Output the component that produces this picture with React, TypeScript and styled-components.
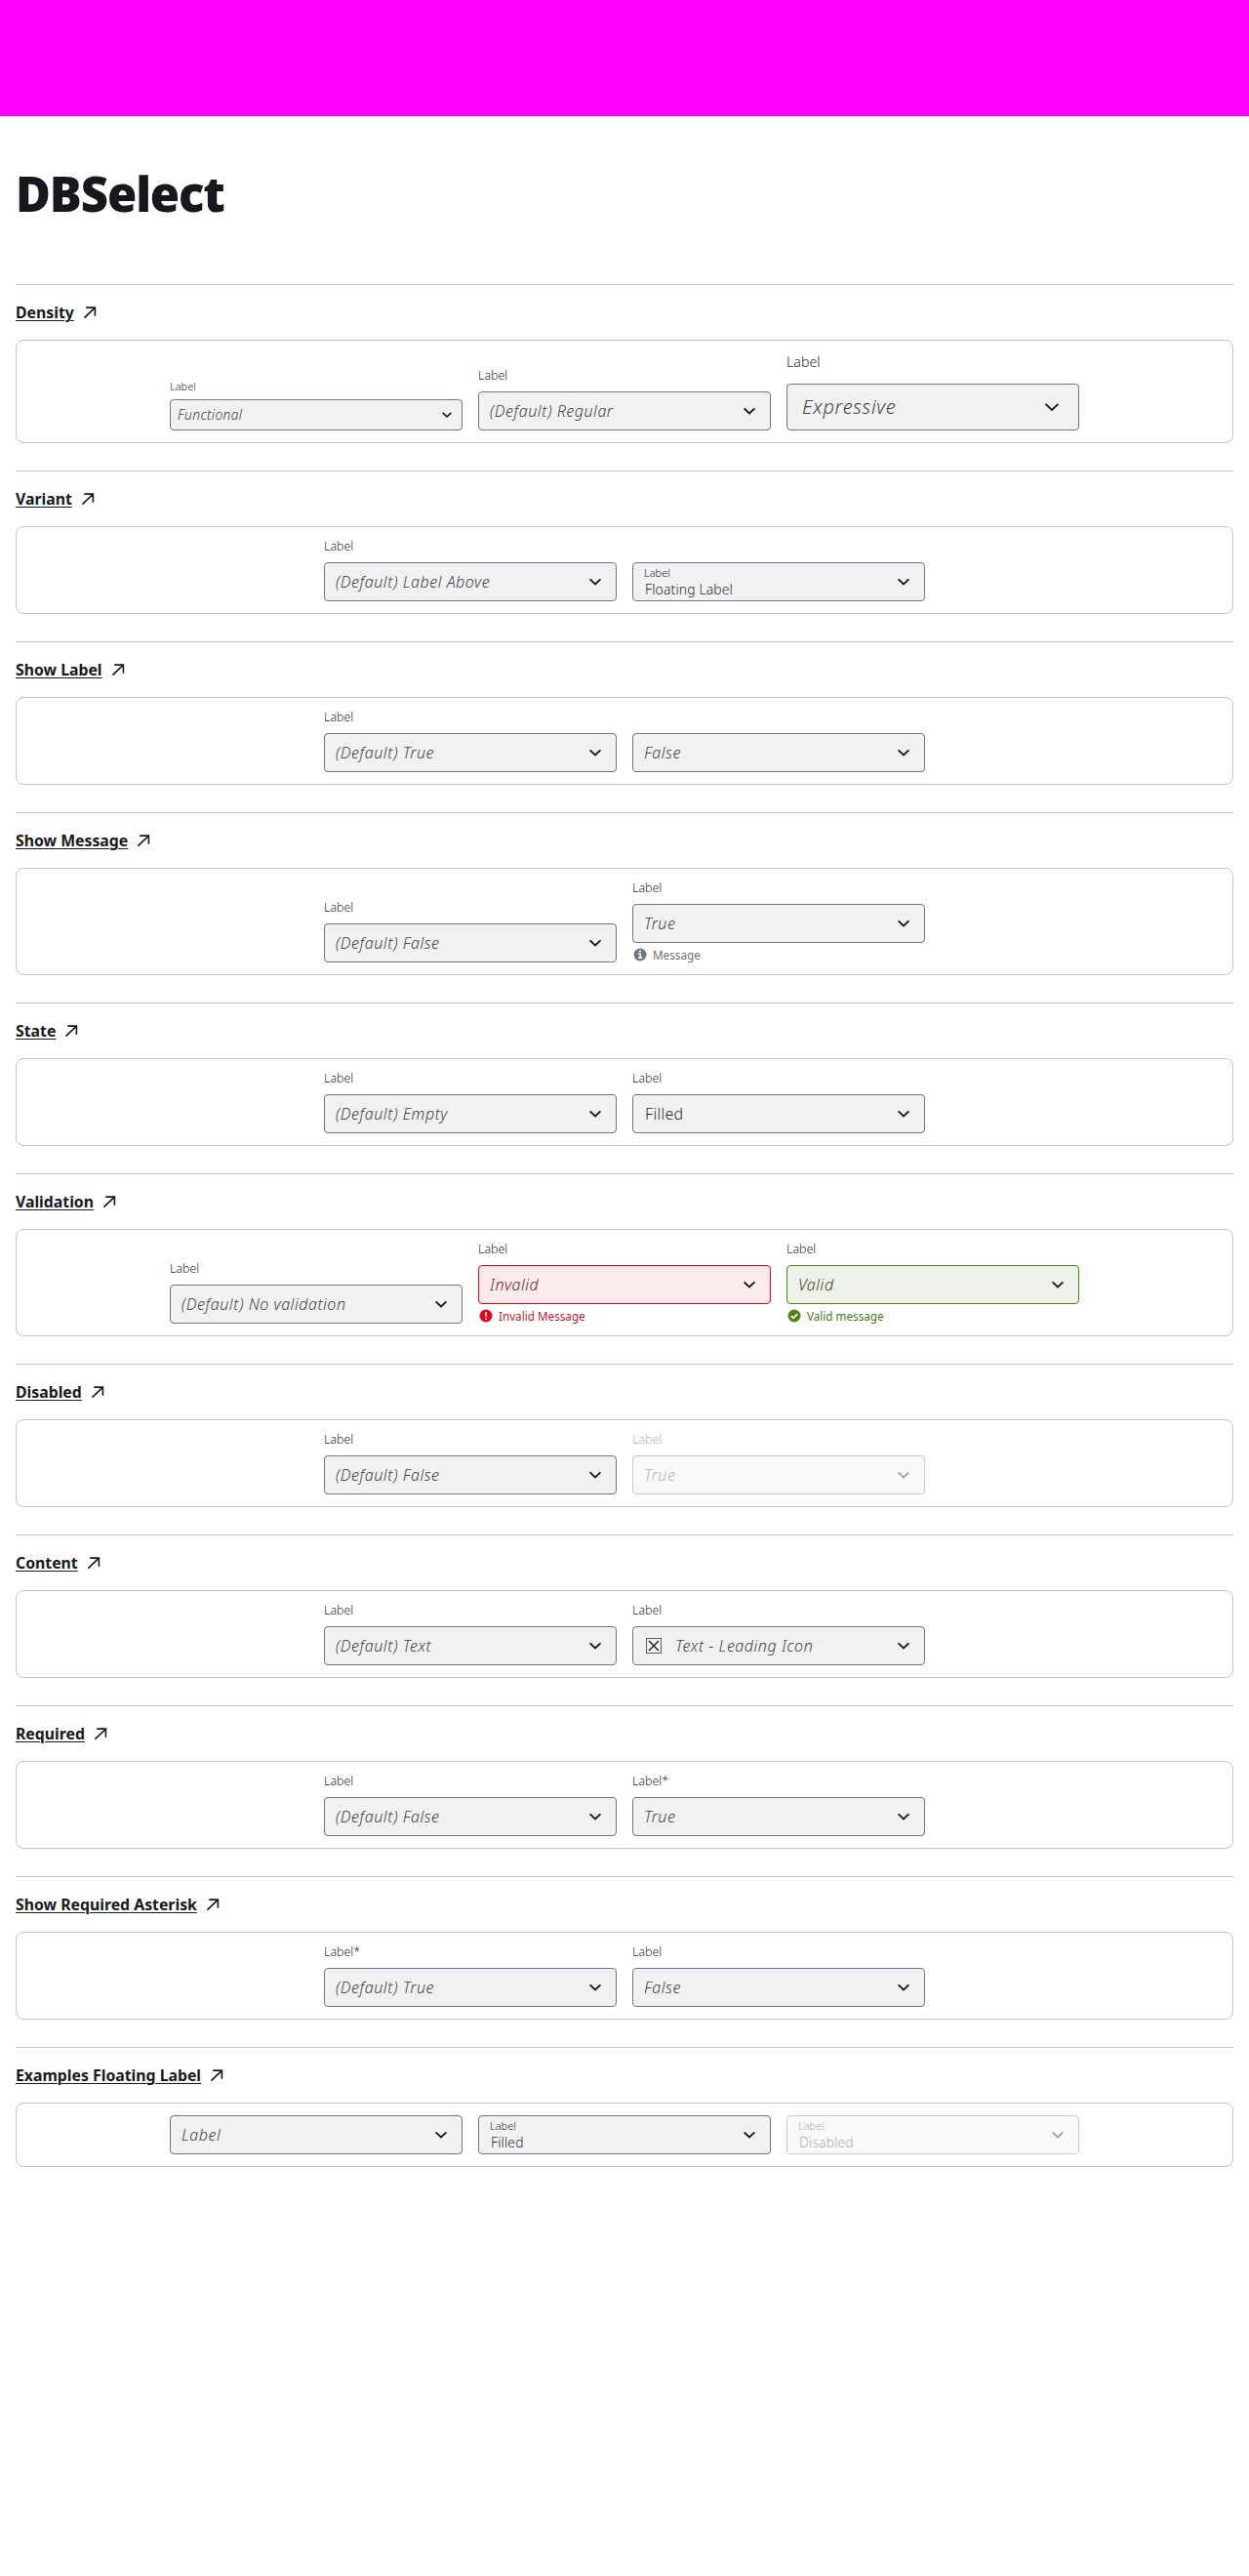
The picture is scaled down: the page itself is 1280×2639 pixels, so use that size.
import React from "react";
import styled, { createGlobalStyle } from "styled-components";

type Density = "functional" | "regular" | "expressive";
type Tone = "neutral" | "invalid" | "valid";

const GlobalStyle = createGlobalStyle`
  *, *::before, *::after { box-sizing: border-box; }
  body {
    margin: 0;
    background: #fff;
    color: #16181b;
    font-family: "Noto Sans", "Open Sans", sans-serif;
  }
`;

const sizes = {
  functional: { height: 32, text: 13.8, label: 11, lineHeight: 13, gap: 7, padding: 7, icon: 16, end: 7, spacing: 0.38 },
  regular: { height: 40, text: 16, label: 12.4, lineHeight: 16, gap: 8, padding: 11, icon: 20, end: 11, spacing: 0.55 },
  expressive: { height: 48, text: 20, label: 14.2, lineHeight: 20, gap: 12, padding: 15, icon: 24, end: 15, spacing: 0.75 },
};

const tones = {
  neutral: { border: "#6f7583", fill: "#f1f1f1", text: "#404145", message: "#6a6f7c", mark: "#717684" },
  invalid: { border: "#ec0016", fill: "#faeaea", text: "#5a2a30", message: "#c5182a", mark: "#ec0016" },
  valid: { border: "#478418", fill: "#eef1ea", text: "#37432f", message: "#46761c", mark: "#4a8612" },
};

const Page = styled.div`
  min-height: 2639px;
`;

const Banner = styled.div`
  height: 119px;
  background: #ff00ff;
`;

const Main = styled.main`
  padding: 0 16px;
`;

const Heading = styled.h1`
  margin: 0;
  height: 172px;
  padding-top: 45px;
  font-size: 49px;
  font-weight: 900;
  line-height: 68px;
  letter-spacing: -1.1px;
`;

const Section = styled.section`
  margin-bottom: 28px;
  border-top: 1px solid #c0c4cc;
`;

const TitleRow = styled.h2`
  display: flex;
  align-items: center;
  gap: 8px;
  height: 56px;
  margin: 0;
  font-size: 15.8px;
`;

const TitleLink = styled.a`
  color: inherit;
  font-weight: 700;
  line-height: 24px;
  text-decoration: underline;
  text-decoration-thickness: 1px;
  text-underline-offset: 2px;
`;

const Panel = styled.div`
  display: flex;
  justify-content: center;
  align-items: flex-end;
  gap: 16px;
  padding: 12px;
  border: 1px solid #c0c4cc;
  border-radius: 8px;
`;

const Field = styled.div<{ $disabled?: boolean }>`
  display: flex;
  flex-direction: column;
  width: 300px;
  opacity: ${(p) => (p.$disabled ? 0.4 : 1)};
`;

const Label = styled.label<{ $density: Density }>`
  margin-bottom: ${(p) => sizes[p.$density].gap}px;
  color: #2a2c2f;
  font-size: ${(p) => sizes[p.$density].label}px;
  font-weight: 350;
  line-height: ${(p) => sizes[p.$density].lineHeight}px;
`;

const Control = styled.div<{ $density: Density; $tone: Tone }>`
  display: flex;
  align-items: center;
  height: ${(p) => sizes[p.$density].height}px;
  padding: 0 ${(p) => sizes[p.$density].end}px 0 ${(p) => sizes[p.$density].padding}px;
  border: 1px solid ${(p) => tones[p.$tone].border};
  border-radius: 4px;
  background: ${(p) => tones[p.$tone].fill};
`;

const Value = styled.span<{ $density: Density; $tone: Tone; $filled?: boolean }>`
  flex: 1;
  padding-left: ${(p) => (p.$filled ? 1 : 0)}px;
  color: ${(p) => (p.$filled ? "#2a2c2f" : tones[p.$tone].text)};
  font-size: ${(p) => sizes[p.$density].text}px;
  font-style: ${(p) => (p.$filled ? "normal" : "italic")};
  font-weight: ${(p) => (p.$filled ? 350 : 320)};
  letter-spacing: ${(p) => (p.$filled ? 0.3 : sizes[p.$density].spacing)}px;
  line-height: 24px;
  white-space: nowrap;
`;

const FloatingStack = styled.div`
  display: flex;
  flex: 1;
  flex-direction: column;
  color: #2a2c2f;
  font-weight: 350;
  padding-bottom: 2px;
`;

const FloatingLabel = styled.label`
  font-size: 11px;
  line-height: 16px;
`;

const FloatingValue = styled.span`
  padding-left: 1px;
  font-size: 13.9px;
  letter-spacing: 0.15px;
  line-height: 17px;
`;

const LeadingSlot = styled.span`
  display: flex;
  margin: 0 13px 0 1px;
`;

const Message = styled.div<{ $tone: Tone }>`
  display: flex;
  align-items: center;
  gap: 5px;
  height: 16px;
  margin-top: 4px;
  color: ${(p) => tones[p.$tone].message};
  font-size: 11.7px;
  line-height: 16px;
`;

const ArrowIcon = () => (
  <svg width="16" height="16" viewBox="0 0 16 16" fill="none" stroke="#16181b" strokeWidth="1.6">
    <path d="M4.2 3.1H13.4V11.7M13.4 3.1L2.4 13.7" />
  </svg>
);

const ChevronIcon = ({ size }: { size: number }) => (
  <svg width={size} height={size} viewBox="0 0 20 20" fill="none" stroke="#16181b" strokeWidth={size > 20 ? 1.6 : 1.9}>
    <path d="M4.6 7.4L10 12.4L15.4 7.4" />
  </svg>
);

const CrossedBoxIcon = () => (
  <svg width="18" height="18" viewBox="0 0 18 18" fill="none">
    <rect x="1.5" y="1.5" width="15" height="15" stroke="#5d5f63" />
    <path d="M4 4L14 14M14 4L4 14" stroke="#16181b" strokeWidth="1.4" />
  </svg>
);

const ToneIcon = ({ tone }: { tone: Tone }) => (
  <svg width="16" height="16" viewBox="0 0 16 16" fill="none">
    <circle cx="8" cy="8" r="6.5" fill={tones[tone].mark} />
    {tone === "neutral" && <path d="M7 4.6H9M6.2 7.2H8.2V11M6 11.2H10.2" stroke="#fff" strokeWidth="1.5" />}
    {tone === "invalid" && <path d="M8 4V8.8M8 10.2V11.9" stroke="#fff" strokeWidth="1.7" />}
    {tone === "valid" && <path d="M4.9 8.2L7.1 10.3L11.2 6.1" stroke="#fff" strokeWidth="1.7" />}
  </svg>
);

interface SelectProps {
  text: string;
  label?: string;
  density?: Density;
  tone?: Tone;
  message?: string;
  filled?: boolean;
  floating?: boolean;
  disabled?: boolean;
  leading?: boolean;
}

const Select = ({
  text,
  label = "Label",
  density = "regular",
  tone = "neutral",
  message,
  filled,
  floating,
  disabled,
  leading,
}: SelectProps) => (
  <Field $disabled={disabled}>
    {label && !floating && <Label $density={density}>{label}</Label>}
    <Control $density={density} $tone={tone}>
      {leading && (
        <LeadingSlot>
          <CrossedBoxIcon />
        </LeadingSlot>
      )}
      {floating ? (
        <FloatingStack>
          <FloatingLabel>{label}</FloatingLabel>
          <FloatingValue>{text}</FloatingValue>
        </FloatingStack>
      ) : (
        <Value $density={density} $tone={tone} $filled={filled}>
          {text}
        </Value>
      )}
      <ChevronIcon size={sizes[density].icon} />
    </Control>
    {message && (
      <Message $tone={tone}>
        <ToneIcon tone={tone} />
        {message}
      </Message>
    )}
  </Field>
);

const sections: { title: string; items: SelectProps[] }[] = [
  {
    title: "Density",
    items: [
      { text: "Functional", density: "functional" },
      { text: "(Default) Regular" },
      { text: "Expressive", density: "expressive" },
    ],
  },
  { title: "Variant", items: [{ text: "(Default) Label Above" }, { text: "Floating Label", floating: true }] },
  { title: "Show Label", items: [{ text: "(Default) True" }, { text: "False", label: "" }] },
  { title: "Show Message", items: [{ text: "(Default) False" }, { text: "True", message: "Message" }] },
  { title: "State", items: [{ text: "(Default) Empty" }, { text: "Filled", filled: true }] },
  {
    title: "Validation",
    items: [
      { text: "(Default) No validation" },
      { text: "Invalid", tone: "invalid", message: "Invalid Message" },
      { text: "Valid", tone: "valid", message: "Valid message" },
    ],
  },
  { title: "Disabled", items: [{ text: "(Default) False" }, { text: "True", disabled: true }] },
  { title: "Content", items: [{ text: "(Default) Text" }, { text: "Text - Leading Icon", leading: true }] },
  { title: "Required", items: [{ text: "(Default) False" }, { text: "True", label: "Label*" }] },
  { title: "Show Required Asterisk", items: [{ text: "(Default) True", label: "Label*" }, { text: "False" }] },
  {
    title: "Examples Floating Label",
    items: [
      { text: "Label", label: "" },
      { text: "Filled", floating: true },
      { text: "Disabled", floating: true, disabled: true },
    ],
  },
];

export default function App() {
  return (
    <Page>
      <GlobalStyle />
      <Banner />
      <Main>
        <Heading>DBSelect</Heading>
        {sections.map(({ title, items }) => (
          <Section key={title}>
            <TitleRow>
              <TitleLink>{title}</TitleLink>
              <ArrowIcon />
            </TitleRow>
            <Panel>
              {items.map((item) => (
                <Select key={item.text} {...item} />
              ))}
            </Panel>
          </Section>
        ))}
      </Main>
    </Page>
  );
}
